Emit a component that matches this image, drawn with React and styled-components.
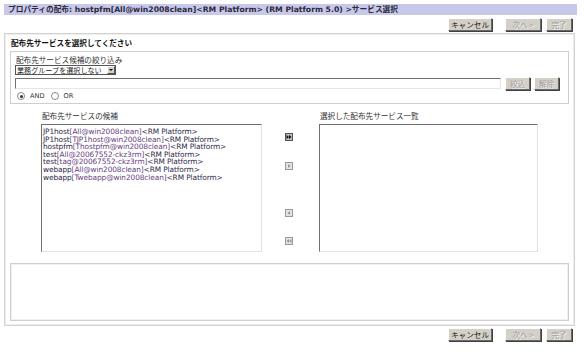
import React from "react";
import styled, { createGlobalStyle } from "styled-components";

const GlobalStyle = createGlobalStyle`
  html, body {
    margin: 0;
    padding: 0;
    background: #ffffff;
  }
  body {
    font-family: "DejaVu Sans", "Noto Sans CJK JP", sans-serif;
    color: #222;
  }
`;

const Page = styled.div`
  width: 585px;
  height: 351px;
  padding: 4px 10px 0 4px;
  box-sizing: border-box;
  display: flex;
  flex-direction: column;
`;

const Header = styled.div`
  height: 11px;
  background: #c8c8ea;
  font-size: 7.7px;
  font-weight: bold;
  line-height: 11px;
  color: #2a2a3a;
  padding-left: 4px;
  white-space: nowrap;
  margin-right: -2px;
`;

const ButtonBar = styled.div`
  display: flex;
  justify-content: flex-end;
  align-items: center;
  height: 14px;
  margin: ${(p) => p.margin};
  padding-right: 3px;
`;

const Btn = styled.button`
  height: 13px;
  width: ${(p) => p.w}px;
  margin-left: ${(p) => p.ml || 0}px;
  padding: 0;
  background: #d4d0c8;
  border: 1px solid;
  border-color: #ffffff #6a6a6a #6a6a6a #ffffff;
  box-shadow: 1px 1px 0 #404040;
  font-family: "Noto Sans CJK JP", sans-serif;
  font-size: 7.6px;
  line-height: 11px;
  color: ${(p) => (p.disabled ? "#9c9c9c" : "#1a1a1a")};
  text-shadow: ${(p) => (p.disabled ? "1px 1px 0 #f4f4f4" : "none")};
  cursor: default;
`;

const Panel = styled.div`
  flex: none;
  height: 293px;
  box-sizing: border-box;
  border: 1px solid #d2d2d2;
  outline: 1px solid #eeeeee;
  outline-offset: -2px;
  padding: 5px 5px 0 5px;
  display: flex;
  flex-direction: column;
`;

const Title = styled.div`
  font-size: 7.6px;
  font-weight: bold;
  line-height: 10px;
  color: #111;
  padding-left: 1px;
`;

const FilterBox = styled.div`
  margin-top: 2px;
  height: 53px;
  box-sizing: border-box;
  border: 1px solid #cfcfcf;
  padding: 3px 6px 0 4px;
  display: flex;
  flex-direction: column;
`;

const Label = styled.div`
  font-family: "Noto Sans CJK JP", sans-serif;
  font-size: 7.6px;
  line-height: 10px;
  color: #333;
  padding-left: ${(p) => p.pl || 0}px;
`;

const Select = styled.div`
  width: 101px;
  height: 10px;
  box-sizing: border-box;
  border: 1px solid #555;
  display: flex;
  align-items: center;
  justify-content: space-between;
  font-family: "Noto Sans CJK JP", sans-serif;
  font-size: 7.1px;
  line-height: 8px;
  padding-left: 1px;
  background: #fff;
  overflow: hidden;
  white-space: nowrap;
`;

const SelectText = styled.span`
  overflow: hidden;
`;

const SelectArrow = styled.span`
  flex: none;
  width: 8px;
  height: 8px;
  box-sizing: border-box;
  background: #d4d0c8;
  border: 1px solid;
  border-color: #fff #555 #555 #fff;
  display: flex;
  align-items: center;
  justify-content: center;
  &::after {
    content: "";
    border-left: 2px solid transparent;
    border-right: 2px solid transparent;
    border-top: 2px solid #000;
  }
`;

const InputRow = styled.div`
  display: flex;
  align-items: center;
  margin-top: 2px;
  gap: 4px;
`;

const TextInput = styled.div`
  width: 486px;
  height: 11px;
  box-sizing: border-box;
  border: 1px solid;
  border-color: #707070 #e6e6e6 #e6e6e6 #707070;
  background: #fff;
`;

const RadioRow = styled.div`
  display: flex;
  align-items: center;
  margin-top: 2px;
  padding-left: 2px;
  font-size: 6.6px;
  color: #333;
`;

const Radio = styled.span`
  width: 6px;
  height: 6px;
  border-radius: 50%;
  border: 1px solid #888;
  background: #fff;
  margin-right: 5px;
  margin-left: ${(p) => p.ml || 0}px;
  display: flex;
  align-items: center;
  justify-content: center;
  &::after {
    content: "";
    width: 3px;
    height: 3px;
    border-radius: 50%;
    background: ${(p) => (p.checked ? "#333" : "transparent")};
  }
`;

const ListArea = styled.div`
  display: flex;
  margin-top: 7px;
  padding-left: 31px;
`;

const ListColumn = styled.div`
  display: flex;
  flex-direction: column;
`;

const ListBox = styled.div`
  width: ${(p) => p.w}px;
  height: 128px;
  margin-top: 3px;
  box-sizing: border-box;
  border: 1px solid;
  border-color: #707070 #e2e2e2 #e2e2e2 #707070;
  background: #fff;
  padding: 3px 0 0 1px;
`;

const Option = styled.div`
  font-family: "DejaVu Sans", sans-serif;
  font-size: 7.4px;
  line-height: 7.6px;
  color: #2e2848;
  white-space: nowrap;
  letter-spacing: -0.1px;
`;

const Bracket = styled.span`
  color: #6a3f80;
`;

const MoveColumn = styled.div`
  width: 8px;
  margin: 0 26px 0 23px;
  display: flex;
  flex-direction: column;
  padding-top: 22px;
`;

const MoveBtn = styled.div`
  width: 8px;
  height: 8px;
  box-sizing: border-box;
  margin-top: ${(p) => p.mt}px;
  border: 1px solid ${(p) => (p.active ? "#555" : "#999")};
  background: ${(p) => (p.active ? "#b8b8b8" : "#e4e4e4")};
  display: flex;
  align-items: center;
  justify-content: center;
`;

const MessageBox = styled.div`
  margin-top: 11px;
  height: 58px;
  box-sizing: border-box;
  border: 1px solid #cfcfcf;
  outline: 1px solid #f0f0f0;
  outline-offset: -2px;
`;

const Arrow = ({ dir, double, color }) => (
  <svg width="6" height="6" viewBox="0 0 6 6">
    {dir === "right" ? (
      <>
        <path d={double ? "M0.5 1 L3 3 L0.5 5 Z" : "M2 1 L4.5 3 L2 5 Z"} fill={color} />
        {double && <path d="M3 1 L5.5 3 L3 5 Z" fill={color} />}
      </>
    ) : (
      <>
        <path d={double ? "M3 1 L0.5 3 L3 5 Z" : "M4 1 L1.5 3 L4 5 Z"} fill={color} />
        {double && <path d="M5.5 1 L3 3 L5.5 5 Z" fill={color} />}
      </>
    )}
  </svg>
);

const candidates = [
  ["JP1host", "[All@win2008clean]"],
  ["JP1host", "[TJP1host@win2008clean]"],
  ["hostpfm", "[Thostpfm@win2008clean]"],
  ["test", "[All@20067552-ckz3rm]"],
  ["test", "[tag@20067552-ckz3rm]"],
  ["webapp", "[All@win2008clean]"],
  ["webapp", "[Twebapp@win2008clean]"],
];

const Buttons = ({ margin }) => (
  <ButtonBar margin={margin}>
    <Btn w={44}>キャンセル</Btn>
    <Btn w={36} ml={13} disabled>
      次へ &gt;
    </Btn>
    <Btn w={26} ml={5} disabled>
      完了
    </Btn>
  </ButtonBar>
);

export default function App() {
  return (
    <>
      <GlobalStyle />
      <Page>
        <Header>
          プロパティの配布: hostpfm[All@win2008clean]&lt;RM Platform&gt; (RM Platform 5.0) &gt;サービス選択
        </Header>
        <Buttons margin="2px 0 2px 0" />
        <Panel>
          <Title>配布先サービスを選択してください</Title>
          <FilterBox>
            <Label pl={1}>配布先サービス候補の絞り込み</Label>
            <Select>
              <SelectText>業務グループを選択しない</SelectText>
              <SelectArrow />
            </Select>
            <InputRow>
              <TextInput />
              <Btn w={25} disabled>
                絞込
              </Btn>
              <Btn w={25} disabled>
                解除
              </Btn>
            </InputRow>
            <RadioRow>
              <Radio checked />
              AND
              <Radio ml={6} />
              OR
            </RadioRow>
          </FilterBox>
          <ListArea>
            <ListColumn>
              <Label pl={1}>配布先サービスの候補</Label>
              <ListBox w={221}>
                {candidates.map(([host, id], i) => (
                  <Option key={i}>
                    {host}
                    <Bracket>{id}</Bracket>
                    &lt;RM Platform&gt;
                  </Option>
                ))}
              </ListBox>
            </ListColumn>
            <MoveColumn>
              <MoveBtn active mt={0}>
                <Arrow dir="right" double color="#111" />
              </MoveBtn>
              <MoveBtn mt={21}>
                <Arrow dir="right" color="#999" />
              </MoveBtn>
              <MoveBtn mt={39}>
                <Arrow dir="left" color="#999" />
              </MoveBtn>
              <MoveBtn mt={20}>
                <Arrow dir="left" double color="#999" />
              </MoveBtn>
            </MoveColumn>
            <ListColumn>
              <Label pl={1}>選択した配布先サービス一覧</Label>
              <ListBox w={219} />
            </ListColumn>
          </ListArea>
          <MessageBox />
        </Panel>
        <Buttons margin="1px 0 0 0" />
      </Page>
    </>
  );
}
